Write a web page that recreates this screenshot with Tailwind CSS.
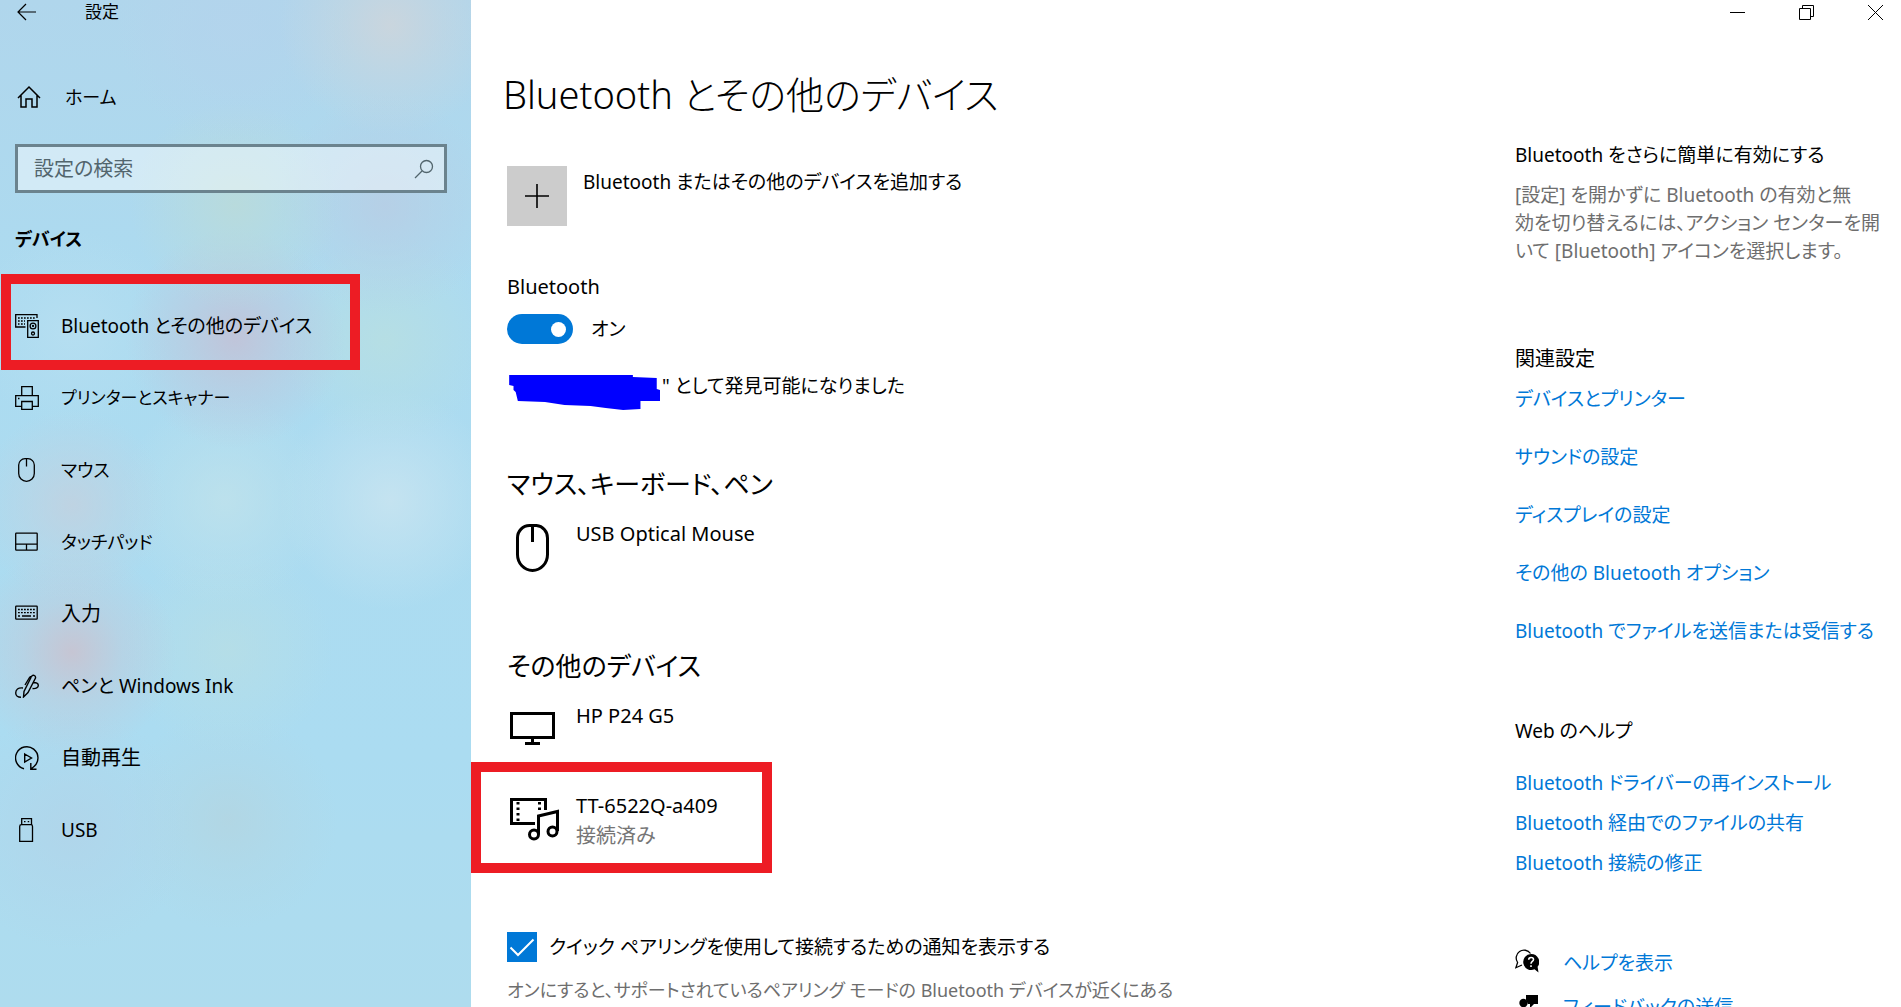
<!DOCTYPE html>
<html lang="ja">
<head>
    <meta charset="UTF-8">
    <meta name="viewport" content="width=device-width, initial-scale=1.0">
    <title>設定</title>
    <script src="https://cdn.jsdelivr.net/npm/@tailwindcss/browser@4"></script>
</head>
<body class="flex h-screen overflow-hidden bg-white font-['Noto_Sans','Noto_Sans_CJK_JP',sans-serif] text-[19px] leading-7 text-black [font-feature-settings:'palt']">

    <!-- Sidebar -->
    <aside class="flex w-[471px] shrink-0 flex-col bg-[#acdcf0] bg-[radial-gradient(circle_at_390px_25px,#d0d5dacc_0,#d0d5da66_50px,#d0d5da00_110px),radial-gradient(circle_at_235px_25px,#b4d3ecaa_0,#b4d3ec66_60px,#b4d3ec00_120px),radial-gradient(circle_at_235px_205px,#bbdbd8cc_0,#bbdbd866_50px,#bbdbd800_105px),radial-gradient(circle_at_385px_205px,#b8cde4cc_0,#b8cde466_50px,#b8cde400_110px),radial-gradient(circle_at_235px_338px,#c5bfd4cc_0,#c5bfd466_50px,#c5bfd400_110px),radial-gradient(circle_at_72px_330px,#b8dff1cc_0,#b8dff155_50px,#b8dff100_100px),radial-gradient(circle_at_385px_340px,#b8dfe1cc_0,#b8dfe166_50px,#b8dfe100_105px),radial-gradient(circle_at_72px_505px,#c3d1dfcc_0,#c3d1df66_45px,#c3d1df00_95px),radial-gradient(circle_at_225px_500px,#c0e2ebcc_0,#c0e2eb66_50px,#c0e2eb00_105px),radial-gradient(circle_at_390px_500px,#c8e4f0dd_0,#c8e4f077_50px,#c8e4f000_110px),radial-gradient(circle_at_72px_652px,#cac2cfdd_0,#cac2cf55_50px,#cac2cf00_105px),radial-gradient(circle_at_228px_650px,#b7dee5cc_0,#b7dee566_50px,#b7dee500_105px),radial-gradient(circle_at_72px_830px,#b1d4e9cc_0,#b1d4e966_60px,#b1d4e900_120px),radial-gradient(circle_at_228px_820px,#b3d5e1cc_0,#b3d5e155_55px,#b3d5e100_110px),linear-gradient(#b0d6ec,#acdbf0_30%,#abdcf1_75%,#aedcee)]">
        <div class="flex h-6 items-center pl-[17px]">
            <button aria-label="戻る" class="w-5">
                <svg class="h-5 w-5" viewBox="0 0 20 20" fill="none" stroke="currentColor" stroke-width="1.2"><path d="M1 10H19M9 2L1 10L9 18"/></svg>
            </button>
            <span class="pl-12 text-[17px]">設定</span>
        </div>

        <a href="#" class="mt-[59px] flex items-center gap-6 pl-[17px] text-[18px]">
            <svg class="h-6 w-6" viewBox="0 0 24 24" fill="none" stroke="currentColor" stroke-width="1.5"><path d="M1 13L12 2L23 13M4 10.500V22H9V14H15V22H20V10.500"/></svg>
            ホーム
        </a>

        <div class="mt-[33px] mr-6 ml-[15px] flex h-[49px] items-center border-3 border-[#6b838e] bg-white/45 pr-2.5 pl-4">
            <input type="text" aria-label="設定の検索" placeholder="設定の検索" class="w-full min-w-0 flex-1 text-[20px] outline-none placeholder:text-[#52656d]">
            <svg class="h-5 w-5 shrink-0" viewBox="0 0 20 20" fill="none" stroke="#52656d" stroke-width="1.3"><circle cx="12.500" cy="7.500" r="6"/><path d="M8 12L1 19"/></svg>
        </div>

        <h2 class="mt-8 pl-[15px] text-[18px] font-bold">デバイス</h2>

        <nav class="mt-[37px] flex flex-col">
            <a href="#" class="relative flex h-18 items-center gap-[22px] pl-[15px]">
                <span class="absolute -top-4 -bottom-2 left-px w-[359px] border-10 border-[#ed1c24]"></span>
                <svg class="h-6 w-6" viewBox="0 0 24 24" fill="none" stroke="currentColor" stroke-width="1.3"><path d="M10.500 13H.7V.7H22V4M12.700 6.700H23.300V23.300H12.700Z"/><circle cx="18" cy="12" r="2.900"/><circle cx="18" cy="19.500" r="1.500"/><circle cx="18" cy="12" r=".5"/><path d="M3 4H20M3 7H10M3 10H4.500M6 10H10" stroke-dasharray="1.700 1.300"/></svg>
                Bluetooth とその他のデバイス
            </a>
            <a href="#" class="flex h-18 items-center gap-[22px] pl-[15px] text-[17px]">
                <svg class="h-6 w-6" viewBox="0 0 24 24" fill="none" stroke="currentColor" stroke-width="1.3"><path d="M6.700 9.500V.7H17.300V9.500M6.500 20.300H.7V9.700H23.300V20.300H17.500M6.700 15.500H17.300V23.300H6.700Z"/><path d="M3 12.500H4.500"/></svg>
                プリンターとスキャナー
            </a>
            <a href="#" class="flex h-18 items-center gap-[22px] pl-[15px] text-[18px]">
                <svg class="h-6 w-6" viewBox="0 0 24 24" fill="none" stroke="currentColor" stroke-width="1.3"><path d="M3.700 7A6.500 6.300 0 0 1 10 .7H13A6.500 6.300 0 0 1 19.300 7V15.500A7.800 7.800 0 0 1 3.700 15.500ZM11.500 .7V8.500"/></svg>
                マウス
            </a>
            <a href="#" class="flex h-18 items-center gap-[22px] pl-[15px] text-[18px]">
                <svg class="h-6 w-6" viewBox="0 0 24 24" fill="none" stroke="currentColor" stroke-width="1.3"><rect x=".7" y="3.200" width="21.500" height="17" rx=".6"/><path d="M.7 14.200H22M11.500 14.200V20"/></svg>
                タッチパッド
            </a>
            <a href="#" class="flex h-18 items-center gap-[22px] pl-[15px] text-[20px]">
                <svg class="h-6 w-6" viewBox="0 0 24 24" fill="none" stroke="currentColor" stroke-width="1.300"><rect x=".7" y="4.200" width="21.500" height="13" rx=".6"/><path d="M3 7.500H20M3 10.700H20" stroke-dasharray="1.800 1.200"/><path d="M3 14H5M7 14H16M18 14H20"/></svg>
                入力
            </a>
            <a href="#" class="flex h-18 items-center gap-[22px] pl-[15px]">
                <svg class="h-6 w-6" viewBox="0 0 24 24" fill="none" stroke="currentColor" stroke-width="1.400"><path d="M8 14C3 13.500 .7 15.500 .7 19C.7 21.500 3 23.300 6 23.300M8.500 23L9 17.500L16.500 2.500C17.500 .5 21 1 20.500 4L13 18.500ZM10 11L14.500 3.500C15 2.700 16 2.500 17 2.500M18.500 8.500C21.500 8.500 23.300 9.500 23.300 11.500C23.300 13.500 21 15 17.500 14.500"/></svg>
                ペンと Windows Ink
            </a>
            <a href="#" class="flex h-18 items-center gap-[22px] pl-[15px] text-[20px]">
                <svg class="h-6 w-6" viewBox="0 0 24 24" fill="none" stroke="currentColor" stroke-width="1.400"><path d="M9 22.800A11.200 11.200 0 1 1 19 20.500L16 23M15.800 17V23.200H21.500M9.700 8L16.500 12L9.700 16Z"/></svg>
                自動再生
            </a>
            <a href="#" class="flex h-18 items-center gap-[22px] pl-[15px]">
                <svg class="h-6 w-6" viewBox="0 0 24 24" fill="none" stroke="currentColor" stroke-width="1.300"><path d="M6.700 7V.7H16.500V7M4.700 8.500Q4.700 6.700 6.500 6.700H16Q17.500 6.700 17.500 8.500V23.300H4.700ZM9 3.700H10.500M12.700 3.700H14.200"/></svg>
                USB
            </a>
        </nav>
    </aside>

    <div class="flex min-w-0 flex-1 flex-col">
        <!-- Window buttons -->
        <div class="flex h-[25px] shrink-0 justify-end gap-[18px]">
            <button aria-label="最小化" class="flex w-[51px] items-center justify-center">
                <svg class="h-[15px] w-[15px]" viewBox="0 0 15 15" fill="none" stroke="currentColor"><path d="M0 7.500H15"/></svg>
            </button>
            <button aria-label="元に戻す" class="flex w-[51px] items-center justify-center">
                <svg class="h-[15px] w-[15px]" viewBox="0 0 15 15" fill="none" stroke="currentColor"><path d="M.5 3.500H11.500V14.500H.5ZM3.500 3.500V.5H14.500V11.500H11.500"/></svg>
            </button>
            <button aria-label="閉じる" class="flex w-[51px] items-center justify-center">
                <svg class="h-[15px] w-[15px]" viewBox="0 0 15 15" fill="none" stroke="currentColor"><path d="M0 0L15 15M15 0L0 15"/></svg>
            </button>
        </div>

        <div class="flex min-h-0 flex-1 overflow-hidden">
            <main class="min-w-0 flex-1 pl-9">
                <h1 class="mt-[41px] -ml-1 text-[38px] leading-14 font-light">Bluetooth とその他のデバイス</h1>

                <button class="mt-11 flex items-start gap-4 text-left">
                    <span class="flex h-15 w-15 items-center justify-center bg-[#ccc]">
                        <svg class="h-6 w-6" viewBox="0 0 24 24" fill="none" stroke="currentColor" stroke-width="1.600"><path d="M0 12H24M12 0V24"/></svg>
                    </span>
                    <span class="pt-0.5">Bluetooth またはその他のデバイスを追加する</span>
                </button>

                <label for="bt" class="mt-[47px] block text-[20px]">Bluetooth</label>
                <div class="mt-[13px] flex items-center gap-[18px]">
                    <input id="bt" type="checkbox" role="switch" checked class="flex h-[30px] w-[66px] appearance-none items-center rounded-full bg-[#0078d7] pr-[7px] before:ml-auto before:block before:h-[15px] before:w-[15px] before:rounded-full before:bg-white">
                    <span>オン</span>
                </div>

                <p class="mt-7 flex h-7 gap-0.5">
                    <svg class="mt-[3px] h-9 w-[153px]" viewBox="0 0 141 36" preserveAspectRatio="none" fill="#00f"><path d="M2 0H116V2L138 3L138 14L141 15V26H123V34L107 35L91 33L77 31L53 30L35 27L10 26L8 17L6 15V11L2 10Z"/></svg>
                    " として発見可能になりました
                </p>

                <h2 class="mt-16 text-[26px] leading-10">マウス、キーボード、ペン</h2>
                <div class="mt-4 flex min-h-[86px] items-start gap-[17px] text-[20px]">
                    <svg class="mt-1 ml-0.5 h-12 w-[50px]" viewBox="0 0 50 48" fill="none" stroke="currentColor" stroke-width="3"><path d="M8.500 14A12 12.500 0 0 1 20.500 1.500H27.500A12 12.500 0 0 1 38.500 14V30.500A15 16 0 0 1 8.500 30.500ZM23.500 1V18"/></svg>
                    USB Optical Mouse
                </div>

                <h2 class="mt-10 text-[26px] leading-10">その他のデバイス</h2>
                <div class="mt-4 flex h-15 items-start gap-[17px] text-[20px]">
                    <svg class="ml-0.5 h-12 w-[50px]" viewBox="0 0 50 48" fill="none" stroke="currentColor" stroke-width="3"><path d="M2.500 11.500H44.500V35.500H2.500ZM23.500 36V41M16 41.500H31"/></svg>
                    HP P24 G5
                </div>
                <div class="-ml-9 flex h-[111px] w-[301px] items-start gap-[17px] border-10 border-[#ed1c24] pt-[19px] pl-7 text-[20px]">
                    <svg class="mt-1.5 h-12 w-[50px]" viewBox="0 0 50 48" fill="none" stroke="currentColor" stroke-width="3"><path d="M26 26.500H2.500V2.500H36.500V13M29.500 37V19L48.500 14.500V34"/><circle cx="25" cy="37.500" r="4.500"/><circle cx="43.500" cy="34.500" r="4.500"/><path d="M9 5V26M30.500 5V14" stroke-dasharray="2.600 2.900"/></svg>
                    <div class="leading-[30px]">
                        <p>TT-6522Q-a409</p>
                        <p class="text-[#767676]">接続済み</p>
                    </div>
                </div>

                <label class="mt-[59px] flex items-center gap-3">
                    <span class="grid">
                        <input type="checkbox" checked class="col-start-1 row-start-1 h-[30px] w-[30px] appearance-none bg-[#0078d7]">
                        <svg class="pointer-events-none col-start-1 row-start-1 h-[30px] w-[30px]" viewBox="0 0 30 30" fill="none" stroke="#fff" stroke-width="2"><path d="M3.500 15.500L11 23L26.500 7.500"/></svg>
                    </span>
                    クイック ペアリングを使用して接続するための通知を表示する
                </label>
                <p class="mt-3.5 text-[18px] text-[#6e6e6e]">オンにすると、サポートされているペアリング モードの Bluetooth デバイスが近くにある</p>
            </main>

            <aside class="w-[386px] shrink-0 pt-29">
                <h3>Bluetooth をさらに簡単に有効にする</h3>
                <p class="mt-3 whitespace-nowrap text-[#6e6e6e]">[設定] を開かずに Bluetooth の有効と無<br>効を切り替えるには、アクション センターを開<br>いて [Bluetooth] アイコンを選択します。</p>

                <h3 class="mt-20 text-[20px]">関連設定</h3>
                <div class="mt-3 flex flex-col items-start gap-[30px] whitespace-nowrap text-[#0078d7]">
                    <a href="#">デバイスとプリンター</a>
                    <a href="#">サウンドの設定</a>
                    <a href="#">ディスプレイの設定</a>
                    <a href="#">その他の Bluetooth オプション</a>
                    <a href="#">Bluetooth でファイルを送信または受信する</a>
                </div>

                <h3 class="mt-18">Web のヘルプ</h3>
                <div class="mt-6 flex flex-col items-start gap-3 whitespace-nowrap text-[#0078d7]">
                    <a href="#">Bluetooth ドライバーの再インストール</a>
                    <a href="#">Bluetooth 経由でのファイルの共有</a>
                    <a href="#">Bluetooth 接続の修正</a>
                </div>

                <div class="mt-18 flex flex-col items-start gap-4 text-[#0078d7]">
                    <a href="#" class="flex gap-6">
                        <svg class="h-6 w-6 text-black" viewBox="0 0 24 24" fill="none" stroke="currentColor" stroke-width="1.300"><path d="M7 16L.8 18.800L2.600 13.500A7.600 7.600 0 1 1 15.500 4.500"/><path d="M16 5A8 8 0 1 0 19.500 20.300L23.500 23.500L22.600 17.800A8 8 0 0 0 16 5Z" fill="currentColor" stroke="none"/><path d="M13.700 10.800C13.700 7.700 18.500 7.700 18.500 10.500C18.500 12.500 16 12.500 16 14.800M16 16.200V18" stroke="#fff" stroke-width="1.600"/></svg>
                        ヘルプを表示
                    </a>
                    <a href="#" class="flex gap-6">
                        <svg class="h-6 w-6 text-black" viewBox="0 0 24 24" fill="currentColor"><path d="M11 2H23V11H19L15 15V11H13L11 7Z"/><circle cx="8.500" cy="10" r="4.200"/><path d="M1 24C1 13 16 13 16 24Z"/></svg>
                        フィードバックの送信
                    </a>
                </div>
            </aside>
        </div>
    </div>
</body>
</html>
